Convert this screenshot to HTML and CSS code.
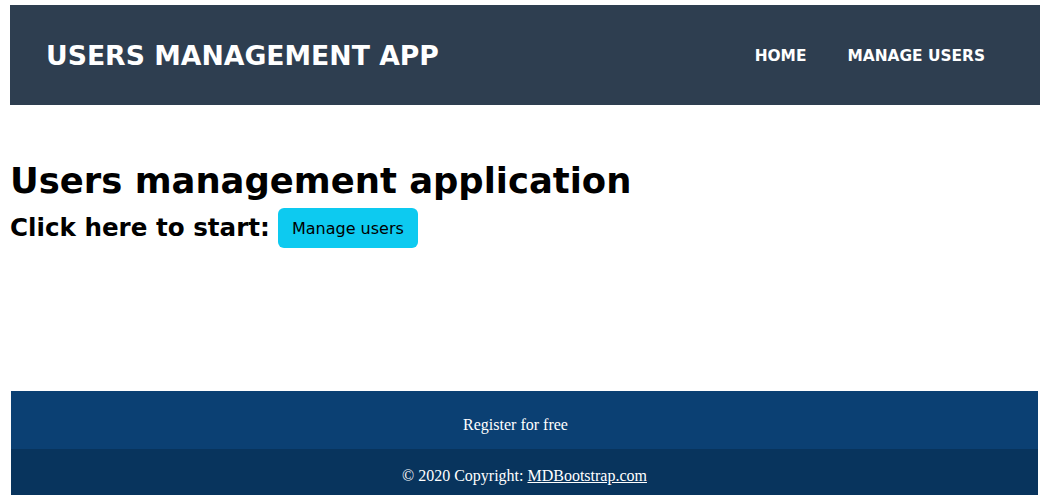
FILE: index.html
```html
<!DOCTYPE html>
<html lang="en">
<head>
<meta charset="utf-8">
<title>Users Management App</title>
<link rel="stylesheet" href="styles.css">
</head>
<body>
<div class="page">
  <nav class="navbar">
    <a class="brand" href="#">USERS MANAGEMENT APP</a>
    <ul class="nav-links">
      <li><a href="#">HOME</a></li>
      <li><a href="#">MANAGE USERS</a></li>
    </ul>
  </nav>
  <main class="content">
    <h1 class="title">Users management application</h1>
    <h3 class="start">Click here to start: <a class="btn-info" href="#">Manage users</a></h3>
  </main>
  <footer class="footer">
    <div class="footer-top">Register for free</div>
    <div class="footer-bottom">© 2020 Copyright: <a href="#">MDBootstrap.com</a></div>
  </footer>
</div>
</body>
</html>
```
FILE: styles.css
```css
html, body {
  margin: 0;
  padding: 0;
  background: #ffffff;
}
.page {
  padding: 5px 10px 0 10px;
  font-family: "DejaVu Sans", "Open Sans", sans-serif;
}
.navbar {
  height: 100px;
  background: #2e3e50;
  display: flex;
  align-items: center;
  justify-content: space-between;
  padding: 0 55px 0 36px;
  box-sizing: border-box;
}
.brand {
  color: #ffffff;
  text-decoration: none;
  font-weight: 700;
  font-size: 26.7px;
}
.nav-links {
  list-style: none;
  display: flex;
  margin: 0;
  padding: 0;
  gap: 41px;
}
.nav-links a {
  color: #ffffff;
  text-decoration: none;
  font-weight: 700;
  font-size: 15.4px;
}
.content {
  height: 286px;
  padding-top: 52px;
  box-sizing: border-box;
}
.title {
  margin: 0;
  font-size: 35.4px;
  font-weight: 700;
  line-height: 48px;
  color: #000;
}
.start {
  margin: 3px 0 0 0;
  font-size: 24.6px;
  font-weight: 700;
  line-height: 40px;
  display: flex;
  align-items: center;
  gap: 8px;
  color: #000;
}
.btn-info {
  display: inline-flex;
  align-items: center;
  justify-content: center;
  width: 140px;
  height: 40px;
  padding-top: 2px;
  box-sizing: border-box;
  background: #0dcaf0;
  border-radius: 6px;
  color: #000;
  text-decoration: none;
  font-weight: 400;
  font-size: 16px;
}
.footer {
  margin: 0 2px 0 1px;
  font-family: "Liberation Serif", "Times New Roman", serif;
  font-size: 16px;
  color: #ffffff;
  text-align: center;
}
.footer-top {
  height: 58px;
  box-sizing: border-box;
  padding: 10px 18px 0 0;
  line-height: 48px;
  background: #0b4073;
}
.footer-bottom {
  height: 46px;
  box-sizing: border-box;
  padding-top: 8px;
  line-height: 38px;
  background: #08345d;
}
.footer-bottom a {
  color: #ffffff;
}
```
